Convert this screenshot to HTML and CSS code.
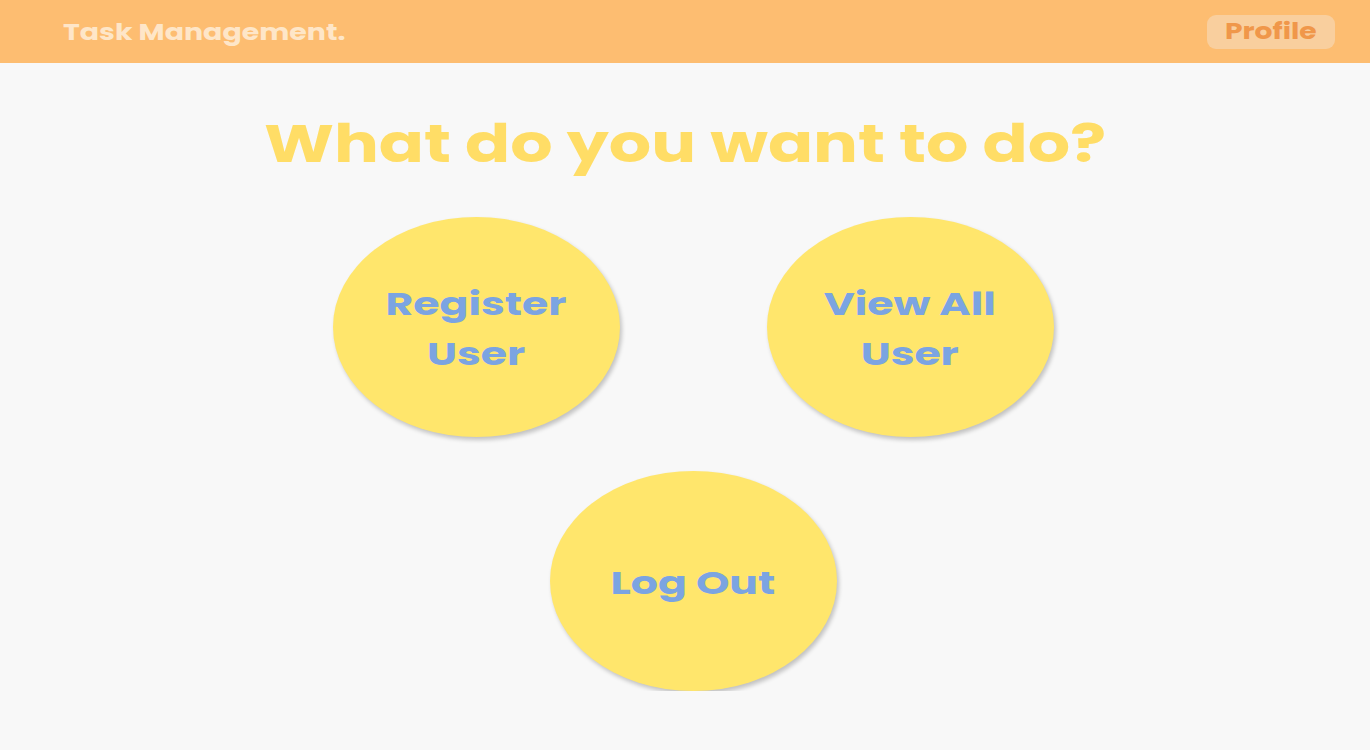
FILE: index.html
```html
<!DOCTYPE html>
<html lang="en">
<head>
<meta charset="utf-8">
<title>Task Management</title>
<link rel="stylesheet" href="styles.css">
</head>
<body>
<header class="topbar">
  <div class="brand"><span class="wide wide-left">Task Management.</span></div>
  <a class="profile" href="#"><span class="wide">Profile</span></a>
</header>
<main class="menu">
  <h1 class="question"><span class="wide">What do you want to do?</span></h1>
  <div class="choices">
    <div class="row">
      <a class="bubble" href="#"><span class="wide">Register<br>User</span></a>
      <a class="bubble" href="#"><span class="wide">View All<br>User</span></a>
    </div>
    <div class="row">
      <a class="bubble" href="#"><span class="wide">Log Out</span></a>
    </div>
  </div>
</main>
</body>
</html>
```
FILE: styles.css
```css
* { box-sizing: border-box; }
html, body {
  margin: 0;
  background: #f8f8f8;
  font-family: Poppins, Montserrat, "Open Sans", sans-serif;
}
.wide {
  display: inline-block;
  transform: scaleX(1.28);
  transform-origin: center;
}
.wide-left { transform-origin: left center; }
.topbar {
  height: 63px;
  background: #fdbd71;
  display: flex;
  align-items: center;
  justify-content: space-between;
  padding: 0 35px 0 63px;
}
.brand {
  color: #fee6c8;
  font-weight: 700;
  font-size: 23px;
  line-height: 32px;
  padding-top: 1px;
}
.brand .wide { transform: scaleX(1.236); }
.profile {
  display: flex;
  align-items: center;
  justify-content: center;
  width: 128px;
  height: 34px;
  border-radius: 9px;
  background: #f9cf9e;
  color: #f0974a;
  font-weight: 700;
  font-size: 22px;
  line-height: 30px;
  text-decoration: none;
  padding-top: 1px;
}
.menu {
  display: flex;
  flex-direction: column;
  align-items: center;
}
.question {
  margin: 55px 0 0;
  font-size: 52px;
  line-height: 52px;
  font-weight: 700;
  color: #ffdd66;
}
.choices {
  margin-top: 47px;
  padding-left: 16px;
  display: flex;
  flex-direction: column;
  align-items: center;
  gap: 34px;
}
.row {
  display: flex;
  gap: 147px;
}
.bubble {
  width: 287px;
  height: 220px;
  border-radius: 50%;
  background: #ffe66c;
  box-shadow: 2px 3px 4px rgba(0,0,0,0.22);
  display: flex;
  align-items: center;
  justify-content: center;
  text-align: center;
  color: #7ba4e2;
  font-weight: 700;
  font-size: 32px;
  line-height: 50px;
  text-decoration: none;
  padding-top: 4px;
}
.bubble .wide { transform: scaleX(1.33); }
```
